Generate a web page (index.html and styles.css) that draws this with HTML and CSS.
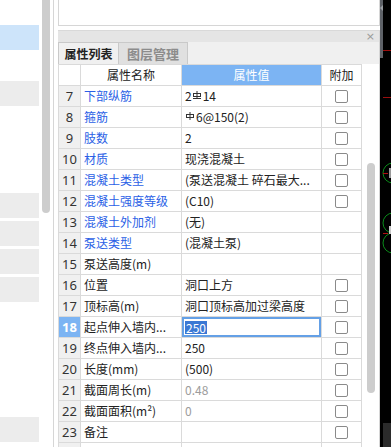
FILE: index.html
```html
<!DOCTYPE html>
<html lang="zh-CN">
<head>
    <meta charset="UTF-8">
    <title>属性列表</title>
    <link rel="stylesheet" href="styles.css">
</head>
<body>
    <div class="app">
        <!-- component tree (left) -->
        <aside class="tree">
            <ul class="tree-list">
                <li class="item"></li>
                <li class="item selected"></li>
                <li class="item"></li>
                <li class="item shaded"></li>
                <li class="item"></li>
                <li class="item"></li>
                <li class="item"></li>
                <li class="item shaded"></li>
                <li class="item shaded"></li>
                <li class="item shaded"></li>
                <li class="item shaded"></li>
                <li class="item"></li>
                <li class="item"></li>
                <li class="item"></li>
                <li class="item"></li>
                <li class="item shaded"></li>
            </ul>
            <div class="tree-scroll"><div class="thumb"></div></div>
        </aside>

        <!-- property panel -->
        <section class="props">
            <div class="preview"></div>
            <div class="dock-title"><span class="close">×</span></div>
            <div class="tabs">
                <div class="tab active">属性列表</div>
                <div class="tab">图层管理</div>
            </div>

            <div class="grid-wrap">
                <div class="grid">
                    <div class="row head">
                        <div class="cell num"></div>
                        <div class="cell name">属性名称</div>
                        <div class="cell value">属性值</div>
                        <div class="cell add">附加</div>
                    </div>
                    <div class="row">
                        <div class="cell num">7</div>
                        <div class="cell name link">下部纵筋</div>
                        <div class="cell value">2<svg class="bar" width="10" height="8" viewBox="0 0 10 8"><rect x="1.5" y="2.5" width="7" height="3" fill="none" stroke="#333"/><line x1="5" y1="0" x2="5" y2="8" stroke="#333"/><line x1="1" y1="7.5" x2="9" y2="7.5" stroke="#333"/></svg>14</div>
                        <div class="cell add"><span class="cb"></span></div>
                    </div>
                    <div class="row">
                        <div class="cell num">8</div>
                        <div class="cell name link">箍筋</div>
                        <div class="cell value"><svg class="bar" width="10" height="8" viewBox="0 0 10 8"><rect x="1.5" y="2.5" width="7" height="3" fill="none" stroke="#333"/><line x1="5" y1="0" x2="5" y2="8" stroke="#333"/></svg>6@150(2)</div>
                        <div class="cell add"><span class="cb"></span></div>
                    </div>
                    <div class="row">
                        <div class="cell num">9</div>
                        <div class="cell name link">肢数</div>
                        <div class="cell value">2</div>
                        <div class="cell add"><span class="cb"></span></div>
                    </div>
                    <div class="row">
                        <div class="cell num">10</div>
                        <div class="cell name link">材质</div>
                        <div class="cell value">现浇混凝土</div>
                        <div class="cell add"><span class="cb"></span></div>
                    </div>
                    <div class="row">
                        <div class="cell num">11</div>
                        <div class="cell name link">混凝土类型</div>
                        <div class="cell value">(泵送混凝土 碎石最大...</div>
                        <div class="cell add"><span class="cb"></span></div>
                    </div>
                    <div class="row">
                        <div class="cell num">12</div>
                        <div class="cell name link">混凝土强度等级</div>
                        <div class="cell value">(C10)</div>
                        <div class="cell add"><span class="cb"></span></div>
                    </div>
                    <div class="row">
                        <div class="cell num">13</div>
                        <div class="cell name link">混凝土外加剂</div>
                        <div class="cell value">(无)</div>
                        <div class="cell add"></div>
                    </div>
                    <div class="row">
                        <div class="cell num">14</div>
                        <div class="cell name link">泵送类型</div>
                        <div class="cell value">(混凝土泵)</div>
                        <div class="cell add"></div>
                    </div>
                    <div class="row">
                        <div class="cell num">15</div>
                        <div class="cell name">泵送高度(m)</div>
                        <div class="cell value"></div>
                        <div class="cell add"></div>
                    </div>
                    <div class="row">
                        <div class="cell num">16</div>
                        <div class="cell name">位置</div>
                        <div class="cell value">洞口上方</div>
                        <div class="cell add"><span class="cb"></span></div>
                    </div>
                    <div class="row">
                        <div class="cell num">17</div>
                        <div class="cell name">顶标高(m)</div>
                        <div class="cell value">洞口顶标高加过梁高度</div>
                        <div class="cell add"><span class="cb"></span></div>
                    </div>
                    <div class="row current">
                        <div class="cell num">18</div>
                        <div class="cell name">起点伸入墙内...</div>
                        <div class="cell value edit"><span class="sel">250</span></div>
                        <div class="cell add"><span class="cb"></span></div>
                    </div>
                    <div class="row">
                        <div class="cell num">19</div>
                        <div class="cell name">终点伸入墙内...</div>
                        <div class="cell value">250</div>
                        <div class="cell add"><span class="cb"></span></div>
                    </div>
                    <div class="row">
                        <div class="cell num">20</div>
                        <div class="cell name">长度(mm)</div>
                        <div class="cell value">(500)</div>
                        <div class="cell add"><span class="cb"></span></div>
                    </div>
                    <div class="row">
                        <div class="cell num">21</div>
                        <div class="cell name">截面周长(m)</div>
                        <div class="cell value muted">0.48</div>
                        <div class="cell add"><span class="cb"></span></div>
                    </div>
                    <div class="row">
                        <div class="cell num">22</div>
                        <div class="cell name">截面面积(m²)</div>
                        <div class="cell value muted">0</div>
                        <div class="cell add"><span class="cb"></span></div>
                    </div>
                    <div class="row">
                        <div class="cell num">23</div>
                        <div class="cell name">备注</div>
                        <div class="cell value"></div>
                        <div class="cell add"><span class="cb"></span></div>
                    </div>
                    <!-- next row, scrolled out of view -->
                    <div class="row">
                        <div class="cell num"></div>
                        <div class="cell name"></div>
                        <div class="cell value"></div>
                        <div class="cell add"><span class="cb"></span></div>
                    </div>
                </div>
                <div class="grid-scroll"><div class="thumb"></div></div>
            </div>
        </section>

        <!-- drawing area (right edge) -->
        <div class="canvas">
            <svg width="11" height="447" viewBox="0 0 11 447">
                <rect x="0" y="0" width="11" height="447" fill="#000"/>
                <rect x="0" y="0" width="3" height="58" fill="#5e6268"/>
                <polygon points="3,5 0,8 3,11" fill="#9a9ea3"/>
                <line x1="3" y1="50.5" x2="11" y2="50.5" stroke="#9b0f0f"/>
                <line x1="3" y1="97.5" x2="11" y2="97.5" stroke="#9b0f0f"/>
                <circle cx="13" cy="173" r="10" fill="none" stroke="#0b8a1a"/>
                <line x1="3" y1="173.5" x2="8" y2="173.5" stroke="#b01010"/>
                <rect x="9" y="168" width="2" height="10" fill="#9a9a9a"/>
                <circle cx="13" cy="223" r="10" fill="none" stroke="#0b8a1a"/>
                <circle cx="13" cy="243" r="10" fill="none" stroke="#0b8a1a"/>
                <line x1="3" y1="233.5" x2="8" y2="233.5" stroke="#b01010"/>
                <rect x="9" y="226" width="2" height="8" fill="#c8c8c8"/>
                <rect x="3" y="423" width="8" height="24" fill="#2b2b2b"/>
            </svg>
        </div>
    </div>
</body>
</html>
```

FILE: styles.css
```css
/* General */
* {
    box-sizing: border-box;
}

body {
    margin: 0;
    background: #ffffff;
    font-family: "Noto Sans CJK SC", "Noto Sans", sans-serif;
    font-size: 12px;
    color: #222;
}

.app {
    display: flex;
    width: 391px;
    height: 447px;
    overflow: hidden;
}

/* Component tree */
.tree {
    display: flex;
    width: 54px;
    flex: none;
    border-right: 1px solid #d6d6d6;
}

.tree-list {
    list-style: none;
    margin: -3px 0 0 0;
    padding: 0;
    width: 39px;
    display: flex;
    flex-direction: column;
    gap: 3px;
}

.tree-list .item {
    height: 25px;
    flex: none;
}

.tree-list .selected {
    background: #cde4fa;
}

.tree-list .shaded {
    background: #ececec;
}

.tree-scroll {
    width: 8px;
    margin-left: 3px;
}

.tree-scroll .thumb {
    height: 213px;
    background: #cdcdcd;
    border-radius: 0 0 4px 4px;
}

/* Property panel */
.props {
    width: 326px;
    flex: none;
    padding-left: 4px;
    display: flex;
    flex-direction: column;
    overflow: hidden;
}

.preview {
    flex: none;
    height: 26px;
    border: 1px solid #d6d6d6;
    border-top: none;
    margin-bottom: 4px;
}

.dock-title {
    flex: none;
    height: 12px;
    background: #e5e5e5;
    border-top: 1px solid #d9d9d9;
    border-right: 1px solid #d6d6d6;
    display: flex;
    justify-content: flex-end;
    align-items: center;
    padding-right: 4px;
}

.close {
    color: #9a9a9a;
    font-family: "DejaVu Sans", sans-serif;
    font-size: 11px;
    line-height: 10px;
}

.tabs {
    flex: none;
    height: 22px;
    display: flex;
    background: #f0f0f0;
    border-right: 1px solid #d6d6d6;
}

.tab {
    height: 22px;
    border: 1px solid #c9c9c9;
    border-bottom: none;
    display: flex;
    align-items: center;
    justify-content: center;
    font-size: 12px;
}

.tab.active {
    width: 61px;
    background: #f0f0f0;
    font-weight: bold;
    color: #222;
}

.tab + .tab {
    width: 70px;
    margin-left: -1px;
    background: #e0e0e0;
    color: #8c8c8c;
    font-size: 13px;
    font-weight: bold;
}

/* Grid */
.grid-wrap {
    flex: 1;
    min-height: 0;
    display: flex;
    border-right: 1px solid #d6d6d6;
}

.grid {
    width: 304px;
    flex: none;
}

.row {
    display: grid;
    grid-template-columns: 23px 101px 140px 40px;
    height: 21px;
}

.row.head {
    height: 22px;
}

.cell {
    border-right: 1px solid #dadada;
    border-bottom: 1px solid #dadada;
    display: flex;
    align-items: center;
    white-space: nowrap;
    overflow: hidden;
    line-height: 20px;
}

.head .cell {
    border-top: 1px solid #dadada;
    justify-content: center;
}

.cell.num {
    border-left: 1px solid #dadada;
    justify-content: center;
    background: #f0f0f0;
    font-family: "Noto Sans", sans-serif;
    font-size: 13px;
    color: #333;
}

.head .cell.num {
    background: #ffffff;
}

.head .cell.value {
    background: #7cb4f3;
    color: #ffffff;
}

.cell.name {
    padding-left: 3px;
}

.cell.value {
    padding-left: 3px;
}

.cell.link {
    color: #2b5fe6;
}

.cell.muted {
    color: #9c9c9c;
}

.cell.add {
    justify-content: center;
}

.head .cell.name,
.head .cell.value {
    padding-left: 0;
}

.cb {
    width: 13px;
    height: 13px;
    border: 1px solid #8a8a8a;
    border-radius: 2px;
    background: #ffffff;
}

.bar {
    align-self: flex-start;
    margin-top: 5px;
    margin-right: 1px;
}

/* Row being edited */
.current .cell.num {
    background: #7cb4f3;
    color: #ffffff;
    font-weight: bold;
}

.cell.edit {
    box-shadow: inset 0 0 0 2px #64a0e6;
}

.sel {
    background: #3a78d4;
    color: #ffffff;
    line-height: 13px;
    padding: 0 1px;
}

.grid-scroll {
    flex: 1;
    padding-left: 5px;
}

.grid-scroll .thumb {
    width: 8px;
    height: 230px;
    margin-top: 99px;
    background: #cdcdcd;
    border-radius: 4px;
}

/* Drawing area */
.canvas {
    width: 11px;
    flex: none;
    background: #000;
}

.canvas svg {
    display: block;
}
```
